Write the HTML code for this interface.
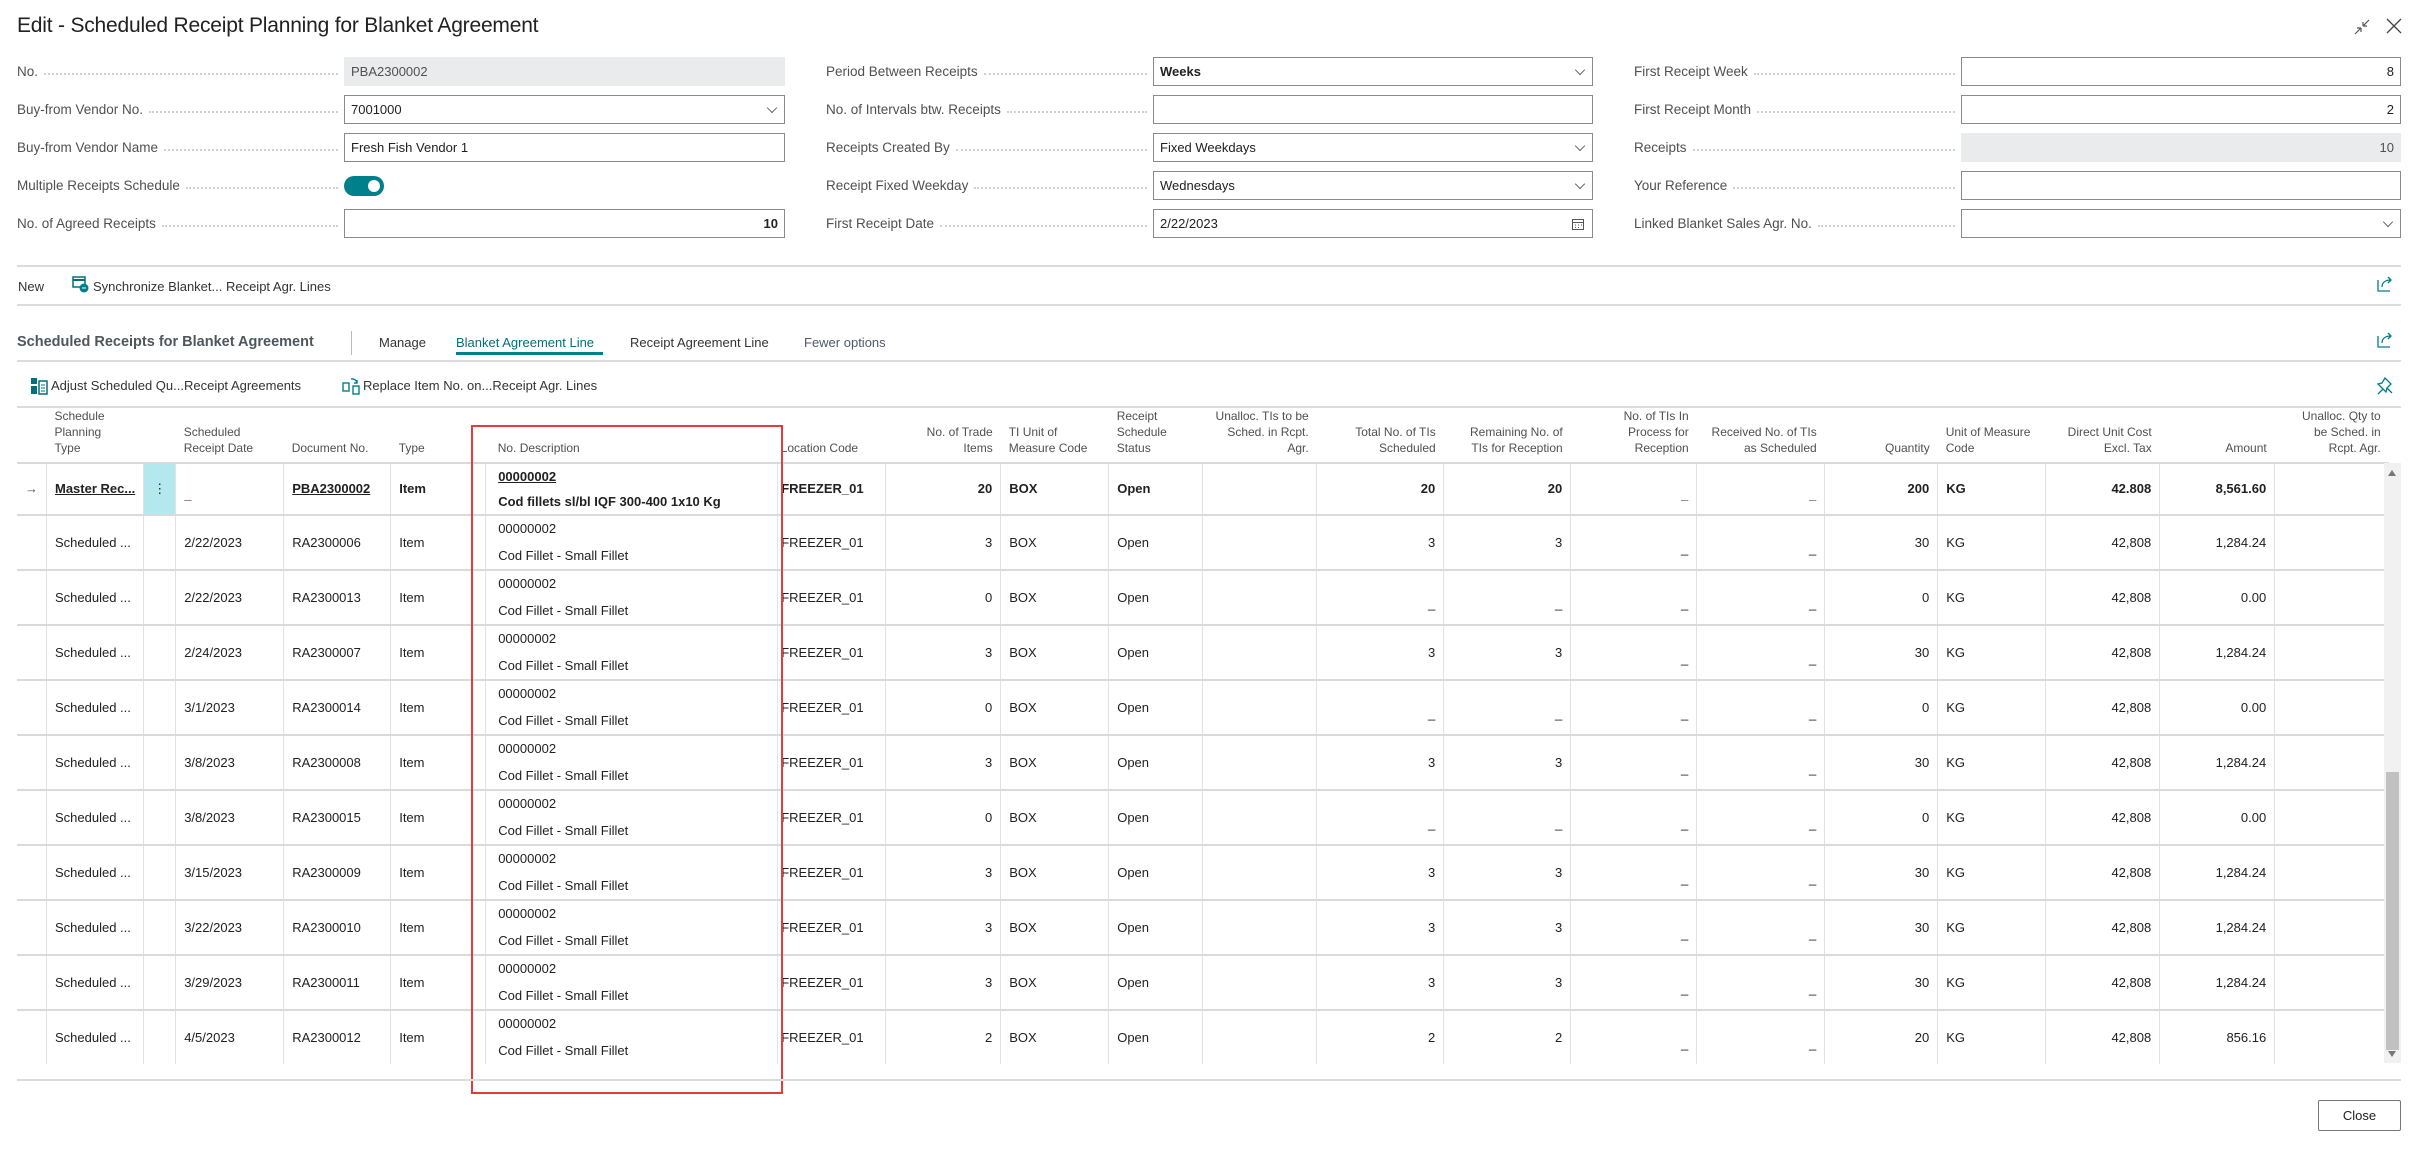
<!DOCTYPE html>
<html><head><meta charset="utf-8">
<style>
*{box-sizing:border-box;margin:0;padding:0}
body{width:2421px;height:1153px;background:#fff;font-family:"Liberation Sans",sans-serif;color:#212121;position:relative;overflow:hidden;font-size:13px}
.abs{position:absolute}
.title{left:17px;top:14px;font-size:21px;color:#212121;letter-spacing:-0.2px}
.lbl{position:absolute;height:29px;display:flex;align-items:center;color:#505050;font-size:13.5px;white-space:nowrap}
.lbl span.d{flex:1;border-bottom:2px dotted #d0d0d0;margin:4px 6px 0 6px;height:1px}
.inp{position:absolute;height:29px;border:1px solid #8a8a8a;display:flex;align-items:center;padding:0 6px;font-size:13px;color:#212121}
.inp.ro{background:#eaebec;border-color:#eaebec;color:#505050}
.inp.r{justify-content:flex-end}
.chev{position:absolute;right:8px;top:8px;width:8px;height:8px;border-right:1px solid #555;border-bottom:1px solid #555;transform:rotate(45deg) scale(0.9)}
.hl{position:absolute;left:17px;width:2384px;height:2px;background:#dcdcdc}
table{position:absolute;left:17px;top:407px;border-collapse:collapse;table-layout:fixed;font-size:13px}
th{height:56px;vertical-align:bottom;font-weight:normal;color:#505050;font-size:12px;line-height:16px;padding:0 8px 6px 8px;text-align:left;white-space:nowrap;overflow:hidden}
th.n,td.n{text-align:right}
td{height:53px;border-top:2px solid #dadada;border-left:1px solid #e2e2e2;padding:0 8px;white-space:nowrap;overflow:hidden;vertical-align:middle;line-height:16px}
tr.m td{height:50px;font-weight:bold}
td.f{border-left:none}
td.desc{line-height:26.5px;padding-left:12px}
tr.m td.desc{line-height:25px}
td.loc,th.loc{padding-left:3px}
td.dash{padding-top:12px}
.red{position:absolute;left:471px;top:425px;width:312px;height:669px;border:2.5px solid #e23c3c}
</style></head><body>
<div class="abs title">Edit - Scheduled Receipt Planning for Blanket Agreement</div>
<svg class="abs" style="left:2352px;top:17px" width="20" height="20" viewBox="0 0 20 20" fill="none" stroke="#555" stroke-width="1.2"><path d="M3 17l6-6M9 11v4M9 11H5M17 3l-6 6M11 9V5M11 9h4"/></svg>
<svg class="abs" style="left:2384px;top:16px" width="20" height="20" viewBox="0 0 20 20" fill="none" stroke="#444" stroke-width="1.3"><path d="M3 3l14 14M17 3L3 17"/></svg>

<div class="lbl" style="left:17px;top:57px;width:327px">No.<span class="d"></span></div>
<div class="inp ro" style="left:344px;top:57px;width:441px">PBA2300002</div>
<div class="lbl" style="left:17px;top:95px;width:327px">Buy-from Vendor No.<span class="d"></span></div>
<div class="inp" style="left:344px;top:95px;width:441px">7001000<i class="chev"></i></div>
<div class="lbl" style="left:17px;top:133px;width:327px">Buy-from Vendor Name<span class="d"></span></div>
<div class="inp" style="left:344px;top:133px;width:441px">Fresh Fish Vendor 1</div>
<div class="lbl" style="left:17px;top:171px;width:327px">Multiple Receipts Schedule<span class="d"></span></div>
<div class="abs" style="left:344px;top:176px;width:40px;height:20px;border-radius:10px;background:#00808a"><div class="abs" style="left:24px;top:4px;width:12px;height:12px;border-radius:6px;background:#fff"></div></div>
<div class="lbl" style="left:17px;top:209px;width:327px">No. of Agreed Receipts<span class="d"></span></div>
<div class="inp r" style="left:344px;top:209px;width:441px"><b>10</b></div>

<div class="lbl" style="left:826px;top:57px;width:327px">Period Between Receipts<span class="d"></span></div>
<div class="inp" style="left:1153px;top:57px;width:440px"><b>Weeks</b><i class="chev"></i></div>
<div class="lbl" style="left:826px;top:95px;width:327px">No. of Intervals btw. Receipts<span class="d"></span></div>
<div class="inp" style="left:1153px;top:95px;width:440px"></div>
<div class="lbl" style="left:826px;top:133px;width:327px">Receipts Created By<span class="d"></span></div>
<div class="inp" style="left:1153px;top:133px;width:440px">Fixed Weekdays<i class="chev"></i></div>
<div class="lbl" style="left:826px;top:171px;width:327px">Receipt Fixed Weekday<span class="d"></span></div>
<div class="inp" style="left:1153px;top:171px;width:440px">Wednesdays<i class="chev"></i></div>
<div class="lbl" style="left:826px;top:209px;width:327px">First Receipt Date<span class="d"></span></div>
<div class="inp" style="left:1153px;top:209px;width:440px">2/22/2023<svg class="abs" style="right:7px;top:7px" width="14" height="14" viewBox="0 0 14 14" fill="none" stroke="#555"><rect x="1.5" y="2.5" width="11" height="10"/><path d="M1.5 5.5h11M4 8h1M7 8h1M10 8h1M4 10.5h1M7 10.5h1"/></svg></div>

<div class="lbl" style="left:1634px;top:57px;width:327px">First Receipt Week<span class="d"></span></div>
<div class="inp r" style="left:1961px;top:57px;width:440px">8</div>
<div class="lbl" style="left:1634px;top:95px;width:327px">First Receipt Month<span class="d"></span></div>
<div class="inp r" style="left:1961px;top:95px;width:440px">2</div>
<div class="lbl" style="left:1634px;top:133px;width:327px">Receipts<span class="d"></span></div>
<div class="inp ro r" style="left:1961px;top:133px;width:440px">10</div>
<div class="lbl" style="left:1634px;top:171px;width:327px">Your Reference<span class="d"></span></div>
<div class="inp" style="left:1961px;top:171px;width:440px"></div>
<div class="lbl" style="left:1634px;top:209px;width:327px">Linked Blanket Sales Agr. No.<span class="d"></span></div>
<div class="inp" style="left:1961px;top:209px;width:440px"><i class="chev"></i></div>

<div class="hl" style="top:265px"></div>
<div class="abs" style="left:18px;top:279px;font-size:13px;color:#333">New</div>
<svg class="abs" style="left:72px;top:276px" width="18" height="17" viewBox="0 0 18 17"><rect x="1" y="1" width="12" height="10" fill="none" stroke="#00707a" stroke-width="1.5"/><path d="M1 4h12" stroke="#00707a" stroke-width="2"/><circle cx="12" cy="12" r="4.5" fill="#00808a"/><path d="M10 12h4" stroke="#fff"/></svg>
<div class="abs" style="left:93px;top:279px;font-size:13px;color:#333">Synchronize Blanket... Receipt Agr. Lines</div>
<svg class="abs" style="left:2376px;top:275px" width="18" height="18" viewBox="0 0 18 18" fill="none" stroke="#00808a" stroke-width="1.3"><path d="M2 5v11h12M6 12c0-5 4-7 9-7M12 2l3 3-3 3"/></svg>
<div class="hl" style="top:304px"></div>

<div class="abs" style="left:17px;top:334px;font-size:14.5px;font-weight:bold;color:#4f575c">Scheduled Receipts for Blanket Agreement</div>
<div class="abs" style="left:351px;top:331px;width:1px;height:24px;background:#bbb"></div>
<div class="abs" style="left:379px;top:335px;color:#333">Manage</div>
<div class="abs" style="left:456px;top:335px;color:#00707a">Blanket Agreement Line</div>
<div class="abs" style="left:456px;top:352px;width:147px;height:3px;background:#00808a"></div>
<div class="abs" style="left:630px;top:335px;color:#333">Receipt Agreement Line</div>
<div class="abs" style="left:804px;top:335px;color:#505a6a">Fewer options</div>
<svg class="abs" style="left:2376px;top:331px" width="18" height="18" viewBox="0 0 18 18" fill="none" stroke="#00808a" stroke-width="1.3"><path d="M2 5v11h12M6 12c0-5 4-7 9-7M12 2l3 3-3 3"/></svg>
<div class="hl" style="top:360px"></div>
<svg class="abs" style="left:30px;top:377px" width="18" height="18" viewBox="0 0 18 18"><rect x="1" y="1" width="6" height="6" fill="#00707a"/><rect x="1" y="9" width="6" height="8" fill="#00707a"/><rect x="9" y="4" width="8" height="13" fill="none" stroke="#00707a" stroke-width="1.5"/><path d="M11 8h4M11 11h4M11 14h4" stroke="#00707a"/></svg>
<div class="abs" style="left:51px;top:378px;color:#333">Adjust Scheduled Qu...Receipt Agreements</div>
<svg class="abs" style="left:342px;top:377px" width="18" height="18" viewBox="0 0 18 18" fill="none" stroke="#00808a" stroke-width="1.4"><rect x="1" y="6" width="6" height="8"/><rect x="11" y="9" width="6" height="8"/><path d="M9 2a5 5 0 0 1 6 4M15 3v3h-3"/></svg>
<div class="abs" style="left:363px;top:378px;color:#333">Replace Item No. on...Receipt Agr. Lines</div>
<svg class="abs" style="left:2376px;top:376px" width="18" height="20" viewBox="0 0 18 20" fill="none" stroke="#00808a" stroke-width="1.3"><path d="M9 2l6 6-4 4-1 4-8-8 4-1zM2 18l5-5M11 12l5 5"/></svg>
<div class="hl" style="top:406px"></div>

<table>
<colgroup><col style="width:25px"><col style="width:96px"><col style="width:32px"><col style="width:108px"><col style="width:107px"><col style="width:95px"><col style="width:292px"><col style="width:108px"><col style="width:115px"><col style="width:108px"><col style="width:94px"><col style="width:114px"><col style="width:127px"><col style="width:127px"><col style="width:126px"><col style="width:128px"><col style="width:113px"><col style="width:108px"><col style="width:114px"><col style="width:115px"><col style="width:114px"></colgroup>
<tr><th></th><th>Schedule<br>Planning<br>Type</th><th></th><th>Scheduled<br>Receipt Date</th><th>Document No.</th><th>Type</th><th style="padding-left:12px">No. Description</th><th class="loc">Location Code</th><th class="n">No. of Trade<br>Items</th><th>TI Unit of<br>Measure Code</th><th>Receipt<br>Schedule<br>Status</th><th class="n">Unalloc. TIs to be<br>Sched. in Rcpt.<br>Agr.</th><th class="n">Total No. of TIs<br>Scheduled</th><th class="n">Remaining No. of<br>TIs for Reception</th><th class="n">No. of TIs In<br>Process for<br>Reception</th><th class="n">Received No. of TIs<br>as Scheduled</th><th class="n">Quantity</th><th>Unit of Measure<br>Code</th><th class="n">Direct Unit Cost<br>Excl. Tax</th><th class="n">Amount</th><th class="n">Unalloc. Qty to<br>be Sched. in<br>Rcpt. Agr.</th></tr>
<tr class="m"><td class="f" style="font-weight:normal;color:#555">&rarr;</td><td style="text-decoration:underline">Master Rec...</td><td style="background:#b3e9ee;text-align:center;font-weight:normal;padding:0">&#8942;</td><td class="dash">_</td><td style="text-decoration:underline">PBA2300002</td><td>Item</td><td class="desc"><span style="text-decoration:underline">00000002</span><br>Cod fillets sl/bl IQF 300-400 1x10 Kg</td><td class="loc">FREEZER_01</td><td class="n">20</td><td>BOX</td><td>Open</td><td></td><td class="n">20</td><td class="n">20</td><td class="n dash">_</td><td class="n dash">_</td><td class="n">200</td><td>KG</td><td class="n">42.808</td><td class="n">8,561.60</td><td></td></tr>
<tr><td class="f"></td><td>Scheduled ...</td><td></td><td>2/22/2023</td><td>RA2300006</td><td>Item</td><td class="desc">00000002<br>Cod Fillet - Small Fillet</td><td class="loc">FREEZER_01</td><td class="n">3</td><td>BOX</td><td>Open</td><td></td><td class="n">3</td><td class="n">3</td><td class="n dash">_</td><td class="n dash">_</td><td class="n">30</td><td>KG</td><td class="n">42,808</td><td class="n">1,284.24</td><td></td></tr>
<tr><td class="f"></td><td>Scheduled ...</td><td></td><td>2/22/2023</td><td>RA2300013</td><td>Item</td><td class="desc">00000002<br>Cod Fillet - Small Fillet</td><td class="loc">FREEZER_01</td><td class="n">0</td><td>BOX</td><td>Open</td><td></td><td class="n dash">_</td><td class="n dash">_</td><td class="n dash">_</td><td class="n dash">_</td><td class="n">0</td><td>KG</td><td class="n">42,808</td><td class="n">0.00</td><td></td></tr>
<tr><td class="f"></td><td>Scheduled ...</td><td></td><td>2/24/2023</td><td>RA2300007</td><td>Item</td><td class="desc">00000002<br>Cod Fillet - Small Fillet</td><td class="loc">FREEZER_01</td><td class="n">3</td><td>BOX</td><td>Open</td><td></td><td class="n">3</td><td class="n">3</td><td class="n dash">_</td><td class="n dash">_</td><td class="n">30</td><td>KG</td><td class="n">42,808</td><td class="n">1,284.24</td><td></td></tr>
<tr><td class="f"></td><td>Scheduled ...</td><td></td><td>3/1/2023</td><td>RA2300014</td><td>Item</td><td class="desc">00000002<br>Cod Fillet - Small Fillet</td><td class="loc">FREEZER_01</td><td class="n">0</td><td>BOX</td><td>Open</td><td></td><td class="n dash">_</td><td class="n dash">_</td><td class="n dash">_</td><td class="n dash">_</td><td class="n">0</td><td>KG</td><td class="n">42,808</td><td class="n">0.00</td><td></td></tr>
<tr><td class="f"></td><td>Scheduled ...</td><td></td><td>3/8/2023</td><td>RA2300008</td><td>Item</td><td class="desc">00000002<br>Cod Fillet - Small Fillet</td><td class="loc">FREEZER_01</td><td class="n">3</td><td>BOX</td><td>Open</td><td></td><td class="n">3</td><td class="n">3</td><td class="n dash">_</td><td class="n dash">_</td><td class="n">30</td><td>KG</td><td class="n">42,808</td><td class="n">1,284.24</td><td></td></tr>
<tr><td class="f"></td><td>Scheduled ...</td><td></td><td>3/8/2023</td><td>RA2300015</td><td>Item</td><td class="desc">00000002<br>Cod Fillet - Small Fillet</td><td class="loc">FREEZER_01</td><td class="n">0</td><td>BOX</td><td>Open</td><td></td><td class="n dash">_</td><td class="n dash">_</td><td class="n dash">_</td><td class="n dash">_</td><td class="n">0</td><td>KG</td><td class="n">42,808</td><td class="n">0.00</td><td></td></tr>
<tr><td class="f"></td><td>Scheduled ...</td><td></td><td>3/15/2023</td><td>RA2300009</td><td>Item</td><td class="desc">00000002<br>Cod Fillet - Small Fillet</td><td class="loc">FREEZER_01</td><td class="n">3</td><td>BOX</td><td>Open</td><td></td><td class="n">3</td><td class="n">3</td><td class="n dash">_</td><td class="n dash">_</td><td class="n">30</td><td>KG</td><td class="n">42,808</td><td class="n">1,284.24</td><td></td></tr>
<tr><td class="f"></td><td>Scheduled ...</td><td></td><td>3/22/2023</td><td>RA2300010</td><td>Item</td><td class="desc">00000002<br>Cod Fillet - Small Fillet</td><td class="loc">FREEZER_01</td><td class="n">3</td><td>BOX</td><td>Open</td><td></td><td class="n">3</td><td class="n">3</td><td class="n dash">_</td><td class="n dash">_</td><td class="n">30</td><td>KG</td><td class="n">42,808</td><td class="n">1,284.24</td><td></td></tr>
<tr><td class="f"></td><td>Scheduled ...</td><td></td><td>3/29/2023</td><td>RA2300011</td><td>Item</td><td class="desc">00000002<br>Cod Fillet - Small Fillet</td><td class="loc">FREEZER_01</td><td class="n">3</td><td>BOX</td><td>Open</td><td></td><td class="n">3</td><td class="n">3</td><td class="n dash">_</td><td class="n dash">_</td><td class="n">30</td><td>KG</td><td class="n">42,808</td><td class="n">1,284.24</td><td></td></tr>
<tr><td class="f"></td><td>Scheduled ...</td><td></td><td>4/5/2023</td><td>RA2300012</td><td>Item</td><td class="desc">00000002<br>Cod Fillet - Small Fillet</td><td class="loc">FREEZER_01</td><td class="n">2</td><td>BOX</td><td>Open</td><td></td><td class="n">2</td><td class="n">2</td><td class="n dash">_</td><td class="n dash">_</td><td class="n">20</td><td>KG</td><td class="n">42,808</td><td class="n">856.16</td><td></td></tr>
</table>
<div class="abs" style="left:0;top:1064px;width:2421px;height:89px;background:#fff"></div>
<div class="abs" style="left:2384px;top:463px;width:17px;height:600px;background:#f1f1f1"></div>
<div class="abs" style="left:2388px;top:470px;width:0;height:0;border-left:4px solid transparent;border-right:4px solid transparent;border-bottom:6px solid #777"></div>
<div class="abs" style="left:2386px;top:772px;width:13px;height:278px;background:#c1c1c1"></div>
<div class="abs" style="left:2388px;top:1051px;width:0;height:0;border-left:4px solid transparent;border-right:4px solid transparent;border-top:6px solid #777"></div>
<div class="red"></div>
<div class="hl" style="top:1079px"></div>
<div class="abs" style="left:2318px;top:1100px;width:83px;height:31px;border:1px solid #777;border-radius:2px;display:flex;align-items:center;justify-content:center;font-size:13px">Close</div>
</body></html>
